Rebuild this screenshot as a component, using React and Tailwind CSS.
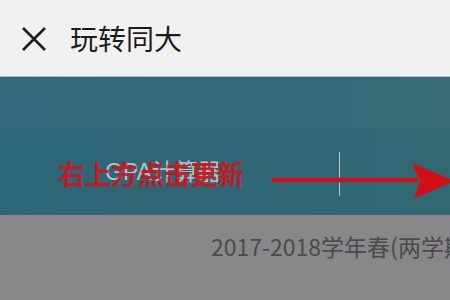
export default function App() {
  return (
    <div className="w-[450px] h-[300px] overflow-hidden flex flex-col" style={{ fontFamily: '"Noto Sans CJK SC", "Noto Sans", sans-serif' }}>
      <div className="h-[76px] bg-[#f1f1f1] flex items-center shrink-0">
        <svg className="ml-[21px] mt-[1px]" width="26" height="26" viewBox="0 0 26 26">
          <path d="M2 2 L24 24 M24 2 L2 24" stroke="#1e1e1e" strokeWidth="2.6" fill="none" />
        </svg>
        <span className="ml-[23px] text-[28px] leading-none text-[#1c1c1c]">玩转同大</span>
      </div>
      <div className="h-[1px] bg-[#9fc2c6] shrink-0" />
      <div className="h-[138px] shrink-0 flex flex-col bg-gradient-to-r from-[#2d6677] via-[#2f6776] to-[#316874]">
        <div className="h-[51px] bg-[#ffffff08]" />
        <div className="flex-1 relative">
          <span className="absolute left-[105px] top-[33px] text-[23px] leading-none text-[#b7c3c7]" style={{ fontFamily: '"Liberation Sans", "Noto Sans CJK SC", sans-serif' }}>GPA计算器</span>
          <span className="absolute left-[58px] top-[32px] text-[27px] leading-none font-bold text-[#d0141c] opacity-90 tracking-[-0.5px]">右上方点击更新</span>
          <div className="absolute left-[339px] top-[24px] w-[1px] h-[44px] bg-[#b9c7c9]" />
          <svg className="absolute left-[270px] top-[34px]" width="180" height="38" viewBox="0 0 180 38">
            <path d="M2 18 L148 18" stroke="#cc1117" strokeWidth="4.5" />
            <path d="M142 1 L180 17 L180 21 L144 37 L150 19 Z" fill="#d10f16" />
          </svg>
        </div>
      </div>
      <div className="flex-1 bg-[#898789] relative">
        <span className="absolute left-[211px] top-[20px] text-[23px] leading-none text-[#4b4a4d] whitespace-nowrap">2017-2018学年春(两学期</span>
      </div>
    </div>
  );
}
